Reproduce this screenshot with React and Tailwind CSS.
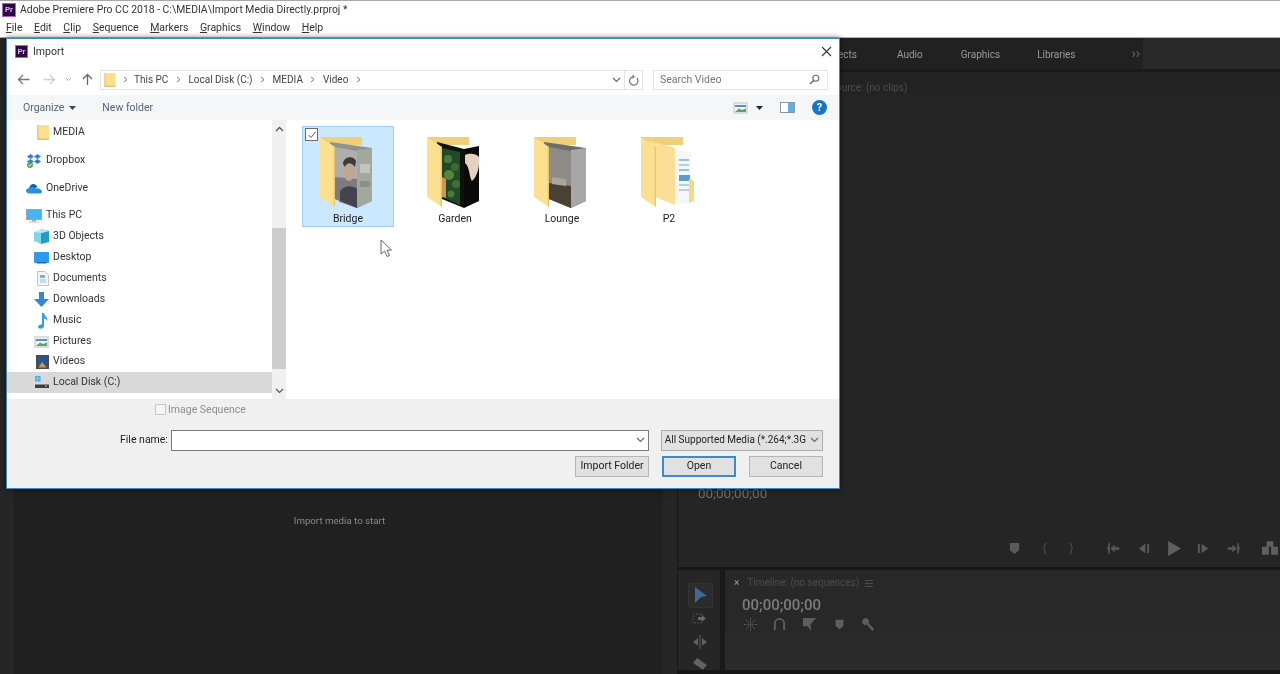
import React from "react";

const sans = "font-['Roboto','Noto_Sans',sans-serif]";

function PrLogo({ size = 14 }) {
  return (
    <div
      style={{ width: size, height: size }}
      className="flex shrink-0 items-center justify-center border border-[#b45cd6] bg-[#2a0a3e] text-[8px] font-bold leading-none text-[#e3a8ff]"
    >
      Pr
    </div>
  );
}

function SmallFolder({ w = 12, h = 15 }) {
  return (
    <svg width={w} height={h} viewBox="0 0 12 15" className="shrink-0">
      <rect x="0" y="0" width="12" height="15" rx="1" fill="#fbdf8e" />
      <rect x="0" y="0" width="1.5" height="15" fill="#eecb6d" />
      <rect x="0" y="13.5" width="12" height="1.5" fill="#e8c468" />
    </svg>
  );
}

function Dropbox() {
  return (
    <svg width="16" height="14" viewBox="0 0 16 14" className="shrink-0">
      <path d="M1 2.5 4.5 0 8 2.5 4.5 5zM8 2.5 11.5 0 15 2.5 11.5 5zM1 7.5 4.5 5 8 7.5 4.5 10zM8 7.5 11.5 5 15 7.5 11.5 10z" fill="#2f7fdc" />
      <circle cx="4" cy="11" r="3" fill="#4cae4f" />
      <path d="M2.5 11l1 1 2-2" stroke="#fff" strokeWidth="0.9" fill="none" />
    </svg>
  );
}

function OneDrive() {
  return (
    <svg width="16" height="11" viewBox="0 0 16 11" className="shrink-0">
      <path d="M3 5.5C3.5 2.5 6 .5 8.5 1.2 10 1.6 11 2.8 11.2 4L3.5 8z" fill="#0f5fb0" />
      <path d="M3.5 10.5C1 10.5 0 9 0 7.8 0 6 1.6 5 3.5 5.4 5 3.5 8 3.5 9.5 5.5 12 4.5 15.5 6 16 8.5 16 9.8 15 10.5 14 10.5z" fill="#2b8fe0" />
    </svg>
  );
}

function ThisPC() {
  return (
    <svg width="16" height="14" viewBox="0 0 16 14" className="shrink-0">
      <rect x="0.5" y="0.5" width="15" height="10" fill="#46b4ee" stroke="#7d8c96" strokeWidth="0.6" />
      <rect x="6" y="10.5" width="4" height="2" fill="#9aa5ac" />
      <rect x="3" y="12.5" width="10" height="1.2" fill="#c6ccd0" />
    </svg>
  );
}

function Objects3D() {
  return (
    <svg width="15" height="15" viewBox="0 0 15 15" className="shrink-0">
      <path d="M7 0 15 2V13L7 15z" fill="#1f9cc7" />
      <path d="M0 3 7 1V15L0 12z" fill="#7fd6ef" />
      <path d="M0 3 7 0 15 2 8 4z" fill="#b7ecf8" />
    </svg>
  );
}

function Desktop() {
  return (
    <svg width="15" height="12" viewBox="0 0 15 12" className="shrink-0">
      <rect width="15" height="11" rx="1" fill="#2b9bf0" />
      <rect x="3" y="10" width="9" height="1.5" fill="#0f6cb8" />
    </svg>
  );
}

function Documents() {
  return (
    <svg width="12" height="15" viewBox="0 0 12 15" className="shrink-0">
      <path d="M.5.5H8L11.5 4V14.5H.5z" fill="#f4f5f6" stroke="#a9afb4" strokeWidth="0.7" />
      <rect x="3" y="4" width="5" height="3" fill="#6fb6e6" />
      <rect x="3" y="8.5" width="6" height="1" fill="#9dbdd4" />
      <rect x="3" y="10.5" width="6" height="1" fill="#9dbdd4" />
    </svg>
  );
}

function Downloads() {
  return (
    <svg width="15" height="15" viewBox="0 0 15 15" className="shrink-0">
      <path d="M5 0H10V7H15L7.5 15 0 7H5z" fill="#2f86dc" />
    </svg>
  );
}

function Music() {
  return (
    <svg width="12" height="16" viewBox="0 0 12 16" className="shrink-0">
      <path d="M5 0H7C7.3 3 11 4 10.5 8 9.8 6.5 8.5 5.8 7 5.5V13C7 15 4.5 16 2.8 15.6 1 15.2.5 13.8 1.5 12.7 2.5 11.5 4 11.3 5 11.8z" fill="#2aa2ea" />
    </svg>
  );
}

function Pictures() {
  return (
    <svg width="15" height="12" viewBox="0 0 15 12" className="shrink-0">
      <rect width="15" height="12" fill="#d8dde1" />
      <rect x="2" y="2" width="11" height="8" fill="#f1f4f6" />
      <rect x="2" y="3" width="11" height="2" fill="#5a8fb8" />
      <path d="M2 10 6 6.5 9 8l4-1.5V10z" fill="#6b9a6c" />
    </svg>
  );
}

function Videos() {
  return (
    <svg width="13" height="14" viewBox="0 0 13 14" className="shrink-0">
      <rect width="13" height="14" fill="#4c4c50" />
      <rect x="2.5" y="1.5" width="8" height="11" fill="#2456a8" />
      <path d="M2.5 12.5 6 7l4.5 5.5z" fill="#d89a35" />
    </svg>
  );
}

function LocalDisk() {
  return (
    <svg width="15" height="13" viewBox="0 0 15 13" className="shrink-0">
      <rect x="1" y="0" width="2.6" height="2.6" fill="#3fb4e8" />
      <rect x="4" y="0" width="2.6" height="2.6" fill="#3fb4e8" />
      <rect x="1" y="3" width="2.6" height="2.6" fill="#3fb4e8" />
      <rect x="4" y="3" width="2.6" height="2.6" fill="#3fb4e8" />
      <rect x="1" y="8.5" width="14" height="3.5" fill="#3b3f42" />
      <rect x="11" y="9.5" width="2" height="1" fill="#8fe08f" />
    </svg>
  );
}

function BigFolder({ kind }) {
  const pages = {
    bridge: (
      <>
        <path d="M10 5 52 11V64L37 71 19 65z" fill="#8f9090" />
        <path d="M37 13 52 11V64L37 71z" fill="#a3a89f" />
        <rect x="40" y="27" width="10" height="9" fill="#c1c5ba" />
        <rect x="40" y="44" width="10" height="6" fill="#8b9187" />
        <path d="M15 10 37 14V71L15 62z" fill="#aeaeae" />
        <path d="M15 40 37 42V71L15 62z" fill="#7b7c80" />
        <ellipse cx="29" cy="33" rx="6" ry="11" fill="#bfa596" />
        <path d="M23 27C23 19 34 18 36 24L35 30C31 25 27 25 25 30z" fill="#3f3937" />
        <path d="M20 54C24 48 33 48 37 52V71L20 64z" fill="#44444c" />
      </>
    ),
    garden: (
      <>
        <path d="M37 12 52 9V64L37 71z" fill="#0a0a0a" />
        <path d="M38 18C42 16 49 16 52 20 53 30 50 40 45 44 42 40 43 30 38 26z" fill="#e4d2c1" />
        <path d="M10 5 37 12V71L15 62z" fill="#0d120d" />
        <path d="M15 11 33 15V68L15 60z" fill="#24482a" />
        <circle cx="21" cy="22" r="4" fill="#4a7a3a" />
        <circle cx="28" cy="30" r="4" fill="#3c6a32" />
        <circle cx="22" cy="38" r="5" fill="#55853f" />
        <circle cx="29" cy="47" r="4" fill="#3f6f34" />
        <circle cx="24" cy="57" r="3.5" fill="#4a7a3a" />
        <path d="M15 40 19 42V61L15 60z" fill="#c89a4c" />
      </>
    ),
    lounge: (
      <>
        <path d="M10 5 52 11V64L37 71 15 62z" fill="#6f6d6b" />
        <path d="M37 13 52 11V64L37 71z" fill="#a9a7a5" />
        <path d="M15 10 37 14V71L15 62z" fill="#8f8b86" />
        <path d="M15 46 37 49V71L15 62z" fill="#4a4036" />
        <path d="M18 40 32 42V49L18 47z" fill="#aaa59f" />
      </>
    ),
    p2: (
      <>
        <path d="M34 13 50 15V65L34 68z" fill="#f4f6f8" />
        <rect x="38" y="22" width="10" height="2" fill="#9cc0dc" />
        <rect x="38" y="27" width="10" height="2" fill="#b7cfe0" />
        <rect x="38" y="32" width="10" height="2" fill="#9cc0dc" />
        <rect x="38" y="38" width="11" height="6" fill="#5c9bcb" />
        <rect x="38" y="47" width="10" height="2" fill="#b7cfe0" />
        <rect x="38" y="52" width="10" height="2" fill="#b7cfe0" />
        <path d="M8 4 34 11V68L14 60z" fill="#fbdf97" />
        <path d="M50 42 53 44V64L48 66V42z" fill="#f7d97f" />
      </>
    ),
  };
  return (
    <svg width="56" height="72" viewBox="0 0 56 72" className="shrink-0">
      <path d="M0 0H42V8H0z" fill="#efcf78" />
      {pages[kind]}
      <path d="M0 0 15 10V70L0 60z" fill="#fbe08f" />
      <path d="M15 10V70L13.6 69V9z" fill="#e9c76c" />
    </svg>
  );
}

function FileItem({ name, kind, selected }) {
  return (
    <div
      className={`relative flex h-[101px] w-[92px] flex-col items-center pt-[10px] ${
        selected ? "border border-[#99d1ff] bg-[#cce8ff]" : "border border-transparent"
      }`}
    >
      <BigFolder kind={kind} />
      <span className="mt-[3px] text-[10.5px] leading-[14px] text-[#222]">{name}</span>
      {selected && (
        <div className="absolute left-[2px] top-[1px] flex h-[13px] w-[13px] items-center justify-center border border-[#6d6d6d] bg-white">
          <svg width="10" height="10" viewBox="0 0 10 10">
            <path d="M1.5 5 4 7.5 8.5 2" fill="none" stroke="#555" strokeWidth="1" />
          </svg>
        </div>
      )}
    </div>
  );
}

function NavRow({ icon, label, indent, active, className = "" }) {
  return (
    <div className={`flex h-[21px] items-center ${active ? "bg-[#d9d9d9]" : ""} ${className}`}>
      <div style={{ width: indent }} className="flex shrink-0 justify-end pr-[4px]">
        {icon}
      </div>
      <span className="text-[10.5px] leading-none text-[#333]">{label}</span>
    </div>
  );
}

function Crumb({ children }) {
  return (
    <>
      <span className="text-[10px] text-[#444]">{children}</span>
      <Chev />
    </>
  );
}

function Chev({ className = "mx-[7.5px]" }) {
  return (
    <svg width="5" height="7" viewBox="0 0 5 7" className={`shrink-0 ${className}`}>
      <path d="M1 1 4 3.5 1 6" fill="none" stroke="#777" strokeWidth="1" />
    </svg>
  );
}

function Btn({ children, primary, w = 74 }) {
  return (
    <div
      style={{ width: w }}
      className={`flex h-[21px] items-center justify-center bg-[#e1e1e1] text-[10.5px] leading-none text-[#222] ${
        primary ? "border-2 border-[#3f8bc6]" : "border border-[#b5b5b5]"
      }`}
    >
      {children}
    </div>
  );
}

function ChevDown({ color = "#666" }) {
  return (
    <svg width="9" height="6" viewBox="0 0 9 6" className="shrink-0">
      <path d="M1 1 4.5 4.5 8 1" fill="none" stroke={color} strokeWidth="1.1" />
    </svg>
  );
}

function Dialog() {
  return (
    <div className={`absolute left-[6px] top-[38px] flex h-[451px] w-[834px] flex-col border border-[#3f88c0] bg-white shadow-[0_0_6px_rgba(0,0,0,0.6)] ${sans}`}>
      {/* title */}
      <div className="flex h-[25px] shrink-0 items-center pl-[8px] pr-[7px]">
        <PrLogo size={13} />
        <span className="ml-[5px] text-[10.5px] text-[#333]">Import</span>
        <svg width="11" height="11" viewBox="0 0 11 11" className="ml-auto">
          <path d="M1 1 10 10M10 1 1 10" stroke="#333" strokeWidth="1.1" />
        </svg>
      </div>

      {/* address */}
      <div className="flex h-[31px] shrink-0 items-center pl-[10px]">
        <svg width="13" height="11" viewBox="0 0 13 11">
          <path d="M6 1 1.5 5.5 6 10M1.5 5.5H12.5" fill="none" stroke="#777" strokeWidth="1.3" />
        </svg>
        <svg width="13" height="11" viewBox="0 0 13 11" className="ml-[13px]">
          <path d="M7 1 11.5 5.5 7 10M11.5 5.5H.5" fill="none" stroke="#d0d0d0" strokeWidth="1.3" />
        </svg>
        <svg width="7" height="5" viewBox="0 0 7 5" className="ml-[9px]">
          <path d="M1 1 3.5 3.5 6 1" fill="none" stroke="#aaa" strokeWidth="1" />
        </svg>
        <svg width="11" height="13" viewBox="0 0 11 13" className="ml-[10px]">
          <path d="M5.5 12V2M1 6 5.5 1.5 10 6" fill="none" stroke="#666" strokeWidth="1.3" />
        </svg>
        <div className="ml-[7px] flex h-[20px] w-[543px] items-center border border-[#e3e3e3] pl-[3px]">
          <SmallFolder w={12} h={14} />
          <Chev className="ml-[7px] mr-[6px]" />
          <Crumb>This PC</Crumb>
          <Crumb>Local Disk (C:)</Crumb>
          <Crumb>MEDIA</Crumb>
          <Crumb>Video</Crumb>
          <div className="ml-auto flex h-full items-center">
            <ChevDown />
            <div className="ml-[3px] flex h-full w-[18px] items-center justify-center border-l border-[#e3e3e3]">
              <svg width="11" height="12" viewBox="0 0 11 12">
                <path d="M8.8 4A4.2 4.2 0 1 1 5 2.8" fill="none" stroke="#777" strokeWidth="1.2" />
                <path d="M4.5 0.5 7 2.8 4.5 5z" fill="#777" />
              </svg>
            </div>
          </div>
        </div>
        <div className="ml-[10px] flex h-[20px] w-[175px] items-center justify-between border border-[#e3e3e3] pl-[6px] pr-[7px]">
          <span className="text-[10.5px] text-[#777]">Search Video</span>
          <svg width="11" height="11" viewBox="0 0 11 11">
            <circle cx="6.8" cy="4.2" r="3" fill="none" stroke="#666" strokeWidth="1.1" />
            <path d="M4.6 6.4 1 10" stroke="#666" strokeWidth="1.4" />
          </svg>
        </div>
      </div>

      {/* toolbar */}
      <div className="flex h-[25px] shrink-0 items-center bg-[#f5f6f7] pl-[16px] pr-[12px]">
        <span className="text-[10.5px] text-[#54657a]">Organize</span>
        <svg width="7" height="4" viewBox="0 0 7 4" className="ml-[5px]">
          <path d="M0 0H7L3.5 4z" fill="#445" />
        </svg>
        <span className="ml-[26px] text-[10.5px] text-[#54657a]">New folder</span>
        <div className="ml-auto flex items-center">
          <Pictures />
          <svg width="7" height="4" viewBox="0 0 7 4" className="ml-[8px]">
            <path d="M0 0H7L3.5 4z" fill="#223" />
          </svg>
          <svg width="15" height="11" viewBox="0 0 15 11" className="ml-[17px]">
            <rect x="0.5" y="0.5" width="14" height="10" fill="#fff" stroke="#8a97a3" />
            <rect x="8" y="1" width="6" height="9" fill="#5fb0e8" />
          </svg>
          <div className="ml-[17px] flex h-[15px] w-[15px] items-center justify-center rounded-full bg-[#1673c8] text-[11px] font-bold leading-none text-white">
            ?
          </div>
        </div>
      </div>

      {/* main */}
      <div className="flex min-h-0 flex-1">
        <div className="flex w-[265px] shrink-0 flex-col">
          <NavRow icon={<SmallFolder />} label="MEDIA" indent={46} className="mt-[2px]" />
          <NavRow icon={<Dropbox />} label="Dropbox" indent={39} className="mt-[7px]" />
          <NavRow icon={<OneDrive />} label="OneDrive" indent={39} className="mt-[7px]" />
          <NavRow icon={<ThisPC />} label="This PC" indent={39} className="mt-[6px]" />
          <NavRow icon={<Objects3D />} label="3D Objects" indent={46} />
          <NavRow icon={<Desktop />} label="Desktop" indent={46} />
          <NavRow icon={<Documents />} label="Documents" indent={46} />
          <NavRow icon={<Downloads />} label="Downloads" indent={46} />
          <NavRow icon={<Music />} label="Music" indent={46} />
          <NavRow icon={<Pictures />} label="Pictures" indent={46} />
          <NavRow icon={<Videos />} label="Videos" indent={46} className="-mt-[1px]" />
          <NavRow icon={<LocalDisk />} label="Local Disk (C:)" indent={46} active />
        </div>
        <div className="flex w-[14px] shrink-0 flex-col items-stretch bg-[#f0f0f0]">
          <div className="flex h-[17px] items-center justify-center">
            <svg width="9" height="6" viewBox="0 0 9 6">
              <path d="M1 5 4.5 1.5 8 5" fill="none" stroke="#555" strokeWidth="1.3" />
            </svg>
          </div>
          <div className="mt-[91px] h-[141px] bg-[#cdcdcd]" />
          <div className="mt-auto flex h-[17px] items-center justify-center">
            <ChevDown color="#555" />
          </div>
        </div>
        <div className="flex flex-1 items-start gap-[15px] pl-[16px] pt-[6px]">
          <FileItem name="Bridge" kind="bridge" selected />
          <FileItem name="Garden" kind="garden" />
          <FileItem name="Lounge" kind="lounge" />
          <FileItem name="P2" kind="p2" />
        </div>
      </div>

      {/* bottom */}
      <div className="flex h-[89px] shrink-0 flex-col bg-[#f0f0f0] pr-[16px] pt-[1px]">
        <div className="flex h-[29px] shrink-0 items-center pb-[10px] pl-[148px]">
          <div className="h-[11px] w-[11px] border border-[#c9c9c9] bg-[#f5f5f5]" />
          <span className="ml-[2px] text-[10.5px] text-[#8f8f8f]">Image Sequence</span>
        </div>
        <div className="flex h-[22px] shrink-0 items-center">
          <span className="ml-[113px] mr-[4px] w-[47px] whitespace-nowrap text-right text-[10.5px] text-[#222]">File name:</span>
          <div className="flex h-[21px] w-[480px] items-center justify-end border border-[#7a7a7a] bg-white pr-[3px]">
            <ChevDown />
          </div>
          <div className="ml-[12px] flex h-[21px] w-[163px] items-center justify-between border border-[#adadad] bg-[#e1e1e1] pl-[3px] pr-[3px]">
            <span className="whitespace-nowrap text-[10px] leading-none text-[#222]">All Supported Media (*.264;*.3G</span>
            <ChevDown />
          </div>
        </div>
        <div className="mt-[5px] flex items-center justify-end gap-[13px]">
          <Btn>Import Folder</Btn>
          <Btn primary>Open</Btn>
          <Btn>Cancel</Btn>
        </div>
      </div>
    </div>
  );
}

const Ico = ({ children, w = 30, vb = "0 0 14 14", s = 13 }) => (
  <div style={{ width: w }} className="flex shrink-0 justify-center">
    <svg width={s} height={s} viewBox={vb}>
      {children}
    </svg>
  </div>
);

function RightPanel() {
  return (
    <div className="flex min-w-0 flex-1 flex-col">
      {/* program */}
      <div className="flex h-[529px] shrink-0 flex-col bg-[#252525]">
        <div className="flex h-[34px] shrink-0 border-b-[3px] border-[#1a1a1a]">
          <div className="flex w-[465px] items-center bg-[#212121] pt-[2px] text-[10px] text-[#9a9a9a]">
            <span className="w-[179px] text-right">Effects</span>
            <span className="ml-[40px]">Audio</span>
            <span className="ml-[38px]">Graphics</span>
            <span className="ml-[37px]">Libraries</span>
            <span className="ml-[56px] pb-[3px] text-[14px] leading-none text-[#666]">››</span>
          </div>
          <div className="flex-1 bg-[#292929]" />
        </div>
        <div className="bg-[#232323] pl-[152px] pt-[9px] text-[10px] leading-[14px] text-[#4e4e4e]">Source: (no clips)</div>
        <div className="flex-1" />
        <div className="pl-[20px] text-[13.5px] leading-[16px] text-[#6e6e6e]">00;00;00;00</div>
        <div className="mt-[39px] flex h-[16px] items-center pl-[321px]">
          <Ico><path d="M2 1H12V9L7 13 2 9z" fill="#5a5a5a" /></Ico>
          <Ico w={30}><path d="M9 1C7 1 8 5 6 7 8 9 7 13 9 13" fill="none" stroke="#5a5a5a" strokeWidth="1" /></Ico>
          <Ico w={24}><path d="M5 1C7 1 6 5 8 7 6 9 7 13 5 13" fill="none" stroke="#5a5a5a" strokeWidth="1" /></Ico>
          <div className="w-[15px]" />
          <Ico><path d="M3 1C1 1 2 5 .5 7 2 9 1 13 3 13M13 6H8V3.5L4 7l4 3.5V8H13z" fill="#5a5a5a" stroke="#5a5a5a" strokeWidth="0.6" /></Ico>
          <Ico><path d="M9 2V12L2 7zM11 2H13V12H11z" fill="#5a5a5a" /></Ico>
          <Ico s={15}><path d="M2 0 14 7 2 14z" fill="#5f5f5f" /></Ico>
          <Ico><path d="M5 2V12L12 7zM1 2H3V12H1z" fill="#5a5a5a" /></Ico>
          <Ico><path d="M11 1C13 1 12 5 13.5 7 12 9 13 13 11 13M1 6H6V3.5L10 7 6 10.5V8H1z" fill="#5a5a5a" stroke="#5a5a5a" strokeWidth="0.6" /></Ico>
          <div className="w-[14px]" />
          <Ico s={16} w={16}><path d="M4 1H10V6H4zM0 6H6V13H0zM8 6H14V13H8z" fill="#5f5f5f" /></Ico>
        </div>
        <div className="h-[11px] shrink-0" />
      </div>
      <div className="h-[3px] shrink-0 bg-[#171717]" />
      {/* timeline */}
      <div className="flex min-h-0 flex-1">
        <div className="flex w-[42px] shrink-0 flex-col items-center bg-[#262626] pl-[2px] pt-[13px]">
          <div className="flex h-[25px] w-[25px] items-center justify-center rounded-[2px] border border-[#333] bg-[#2c2c2c]">
            <svg width="13" height="16" viewBox="0 0 13 16"><path d="M1 0 13 9 7 10 1 16z" fill="#3f6a96" /></svg>
          </div>
          <svg width="16" height="12" viewBox="0 0 16 12" className="mt-[5px]">
            <rect x="1" y="1" width="9" height="9" fill="none" stroke="#5a5a5a" strokeDasharray="1.5 1.5" />
            <path d="M6 4H10V2L14 5.5 10 9V7H6z" fill="#6a6a6a" />
          </svg>
          <svg width="16" height="14" viewBox="0 0 16 14" className="mt-[11px]">
            <path d="M7.5 0H8.5V14H7.5zM6 3V11L1 7zM10 3V11L15 7z" fill="#626262" />
          </svg>
          <svg width="14" height="12" viewBox="0 0 14 12" className="mt-[9px]">
            <path d="M4 0 14 7 10 12 0 5z" fill="#626262" />
          </svg>
        </div>
        <div className="w-[5px] shrink-0 bg-[#1a1a1a]" />
        <div className="flex min-w-0 flex-1 flex-col bg-[#282828]">
          <div className="flex h-[20px] shrink-0 items-end pl-[9px] text-[10px] leading-[14px] text-[#4d4d4d]">
            <span className="text-[#a0a0a0]">×</span>
            <span className="ml-[8px]">Timeline: (no sequences)</span>
            <svg width="8" height="7" viewBox="0 0 8 7" className="mb-[3px] ml-[6px]"><path d="M0 .5H8M0 3.5H8M0 6.5H8" stroke="#4d4d4d" /></svg>
          </div>
          <div className="mt-[7px] pl-[17px] text-[15px] font-medium leading-[17px] text-[#7c7c7c]">00;00;00;00</div>
          <div className="mt-[3px] flex h-[14px] shrink-0 items-center pl-[11px]">
            <Ico w={29}><path d="M7 0V14M0 7H14M2 2 12 12M12 2 2 12" stroke="#5e5e5e" strokeDasharray="2 1" /></Ico>
            <Ico w={29}><path d="M2 13V6A5 5 0 0 1 12 6V13" fill="none" stroke="#5e5e5e" strokeWidth="2" /></Ico>
            <Ico w={30}><path d="M0 0H14L8 7 9 14 5 9H0z" fill="#5e5e5e" /></Ico>
            <Ico w={30} s={11}><path d="M2 1H12V9L7 13 2 9z" fill="#5e5e5e" /></Ico>
            <Ico w={29}><path d="M1 1 5 0 8 3 7 5 13 12 11 14 5 7 3 8 0 5z" fill="#5e5e5e" /></Ico>
          </div>
          <div className="mt-[2px] flex-1 bg-[#2b2b2b]" />
        </div>
      </div>
      <div className="h-[4px] shrink-0 bg-[#171717]" />
    </div>
  );
}

function Cursor() {
  return (
    <svg width="13" height="19" viewBox="0 0 13 19" className="absolute left-[380px] top-[239px]">
      <path d="M1 1V15L4.5 12 7 17.5 9.5 16.5 7 11.2 11.5 11z" fill="#fff" stroke="#555" strokeWidth="0.9" />
    </svg>
  );
}

export default function App() {
  return (
    <div className={`relative flex h-[674px] w-[1280px] flex-col overflow-hidden bg-[#171717] blur-[0.4px] ${sans}`}>
      <div className="flex h-[19px] shrink-0 items-center border-t border-[#a8a8a8] bg-white pl-[2px]">
        <PrLogo size={14} />
        <span className="ml-[4px] text-[10.4px] leading-none text-[#333]">Adobe Premiere Pro CC 2018 - C:\MEDIA\Import Media Directly.prproj *</span>
      </div>
      <div className="flex h-[18px] shrink-0 items-center gap-[11.5px] bg-white pl-[6px] text-[10.5px] leading-none text-[#333]">
        <span><u>F</u>ile</span>
        <span><u>E</u>dit</span>
        <span><u>C</u>lip</span>
        <span><u>S</u>equence</span>
        <span><u>M</u>arkers</span>
        <span><u>G</u>raphics</span>
        <span><u>W</u>indow</span>
        <span><u>H</u>elp</span>
      </div>
      <div className="h-[1px] shrink-0 bg-[#a8b4bc]" />
      <div className="flex min-h-0 flex-1">
        <div className="flex w-[677px] shrink-0">
          <div className="w-[14px] shrink-0 bg-[#262626]" />
          <div className="flex flex-1 flex-col items-center bg-[#202020] pl-[2px] pt-[476px]">
            <span className="text-[9.7px] leading-[14px] text-[#8a8a8a]">Import media to start</span>
          </div>
          <div className="w-[14px] shrink-0 bg-[#262626]" />
        </div>
        <div className="w-[1px] shrink-0 bg-[#171717]" />
        <RightPanel />
      </div>
      <Dialog />
      <Cursor />
    </div>
  );
}
